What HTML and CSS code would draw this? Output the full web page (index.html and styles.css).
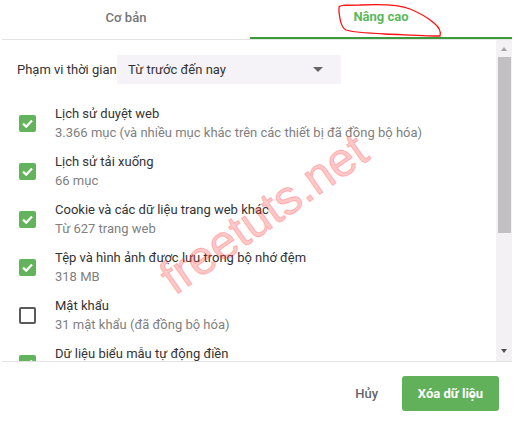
FILE: index.html
```html
<!DOCTYPE html>
<html lang="vi">
<head>
<meta charset="utf-8">
<title>Xóa dữ liệu duyệt web</title>
<link rel="stylesheet" href="styles.css">
</head>
<body>
<div class="dialog">
  <div class="tabs">
    <div class="tab">Cơ bản</div>
    <div class="tab active">Nâng cao</div>
  </div>
  <div class="body">
    <div class="content">
      <div class="range-row">
        <span class="range-label">Phạm vi thời gian</span>
        <div class="select">
          <span>Từ trước đến nay</span>
          <span class="caret"></span>
        </div>
      </div>
      <div class="items">
        <div class="item">
          <span class="box checked"><svg viewBox="0 0 17 17"><path d="M4 8.6 L7.2 11.6 L13 5.4" /></svg></span>
          <div class="text"><div class="title">Lịch sử duyệt web</div><div class="sub">3.366 mục (và nhiều mục khác trên các thiết bị đã đồng bộ hóa)</div></div>
        </div>
        <div class="item">
          <span class="box checked"><svg viewBox="0 0 17 17"><path d="M4 8.6 L7.2 11.6 L13 5.4" /></svg></span>
          <div class="text"><div class="title">Lịch sử tải xuống</div><div class="sub">66 mục</div></div>
        </div>
        <div class="item">
          <span class="box checked"><svg viewBox="0 0 17 17"><path d="M4 8.6 L7.2 11.6 L13 5.4" /></svg></span>
          <div class="text"><div class="title">Cookie và các dữ liệu trang web khác</div><div class="sub">Từ 627 trang web</div></div>
        </div>
        <div class="item">
          <span class="box checked"><svg viewBox="0 0 17 17"><path d="M4 8.6 L7.2 11.6 L13 5.4" /></svg></span>
          <div class="text"><div class="title">Tệp và hình ảnh được lưu trong bộ nhớ đệm</div><div class="sub">318 MB</div></div>
        </div>
        <div class="item">
          <span class="box"></span>
          <div class="text"><div class="title">Mật khẩu</div><div class="sub">31 mật khẩu (đã đồng bộ hóa)</div></div>
        </div>
        <div class="item">
          <span class="box checked"><svg viewBox="0 0 17 17"><path d="M4 8.6 L7.2 11.6 L13 5.4" /></svg></span>
          <div class="text"><div class="title">Dữ liệu biểu mẫu tự động điền</div><div class="sub"></div></div>
        </div>
      </div>
    </div>
    <div class="scrollbar">
      <span class="arrow up"></span>
      <span class="thumb"></span>
      <span class="track"></span>
      <span class="arrow down"></span>
    </div>
  </div>
  <div class="footer">
    <button class="btn cancel">Hủy</button>
    <button class="btn primary">Xóa dữ liệu</button>
  </div>
</div>
<svg class="scribble" viewBox="0 0 521 50" width="521" height="50">
  <path d="M339 8 C338 5 345 5 360 5 C380 4 398 4 410 9 C420 13 428 18 434 23 C439 27 441 32 440 36 C430 36 410 35 385 34 C365 33 352 32 346 30 C341 27 340 20 339 12 Z" />
</svg>
<div class="watermark">freetuts.net</div>
</body>
</html>
```
FILE: styles.css
```css
* { box-sizing: border-box; }
html, body { margin: 0; padding: 0; background: #fff; }
body {
  width: 521px;
  height: 426px;
  overflow: hidden;
  position: relative;
  font-family: Roboto, "Liberation Sans", sans-serif;
  font-size: 13px;
  color: #333;
}
.dialog {
  margin-left: 2px;
  width: 510px;
}
.tabs {
  display: grid;
  grid-template-columns: 248px 262px;
  height: 40px;
  border-bottom: 1px solid #e3e3e3;
}
.tab {
  display: flex;
  align-items: center;
  justify-content: center;
  padding-bottom: 4px;
  font-size: 13px;
  font-weight: 500;
  color: #757575;
}
.tab.active {
  color: #5cb85c;
  font-weight: 700;
  border-bottom: 2px solid #3b9b3b;
}
.body {
  display: flex;
  height: 322px;
  border-bottom: 1px solid #e3e3e3;
}
.content {
  flex: 1;
  overflow: hidden;
  padding-left: 15px;
}
.range-row {
  display: flex;
  align-items: center;
  margin-top: 15px;
  height: 29px;
}
.range-label {
  width: 100px;
  color: #333;
}
.select {
  width: 224px;
  height: 29px;
  background: #f5f3f7;
  display: flex;
  align-items: center;
  justify-content: space-between;
  padding: 0 18px 0 11px;
  color: #333;
}
.caret {
  width: 0;
  height: 0;
  border-left: 5px solid transparent;
  border-right: 5px solid transparent;
  border-top: 5px solid #666;
}
.items {
  margin-top: 15px;
}
.item {
  display: flex;
  align-items: center;
  height: 48px;
  gap: 19px;
  padding-left: 2px;
}
.box {
  width: 17px;
  height: 17px;
  flex: none;
  border: 2px solid #5a5a5a;
  border-radius: 2px;
  background: #fff;
  display: flex;
}
.box.checked {
  border: none;
  background: #63b35d;
}
.box svg {
  width: 17px;
  height: 17px;
}
.box path {
  fill: none;
  stroke: #fff;
  stroke-width: 2.2;
}
.text {
  line-height: 19px;
}
.title { color: #333; }
.sub { color: #808080; min-height: 19px; }
.scrollbar {
  width: 16px;
  background: #f3f1f4;
  display: flex;
  flex-direction: column;
  align-items: center;
}
.arrow {
  width: 0;
  height: 0;
  border-left: 3.5px solid transparent;
  border-right: 3.5px solid transparent;
  flex: none;
}
.arrow.up {
  margin-top: 7px;
  border-bottom: 4px solid #a3a3a3;
}
.arrow.down {
  margin-bottom: 8px;
  border-top: 4px solid #505050;
}
.thumb {
  margin-top: 6px;
  width: 13px;
  height: 176px;
  background: #c2c0c3;
  flex: none;
}
.track { flex: 1; }
.footer {
  display: flex;
  justify-content: flex-end;
  align-items: center;
  height: 63px;
  padding-right: 13px;
  gap: 24px;
}
.btn {
  font-family: Roboto, "Liberation Sans", sans-serif;
  font-size: 13px;
  border: none;
  cursor: pointer;
}
.cancel {
  background: none;
  color: #666;
  font-weight: 500;
  padding: 0;
}
.primary {
  width: 97px;
  height: 35px;
  border-radius: 3px;
  background: #61b15b;
  color: #fff;
  font-weight: 700;
}
.scribble {
  position: absolute;
  left: 0;
  top: 0;
  pointer-events: none;
}
.scribble path {
  fill: none;
  stroke: #ff1010;
  stroke-width: 1.3;
}
.watermark {
  position: absolute;
  left: 264px;
  top: 214px;
  transform: translate(-50%, -50%) rotate(-35deg);
  font-family: "Liberation Sans", sans-serif;
  font-weight: 400;
  font-size: 48px;
  line-height: 1;
  color: rgba(255, 60, 60, 0.3);
  -webkit-text-stroke: 1px rgba(255, 60, 60, 0.3);
  white-space: nowrap;
  pointer-events: none;
}
```
